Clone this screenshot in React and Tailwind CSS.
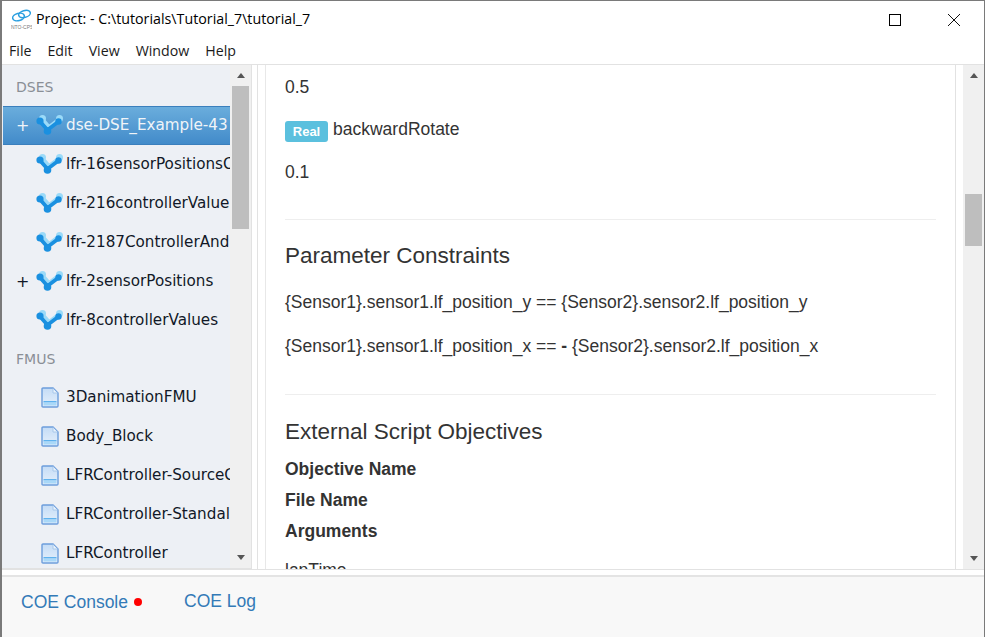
const V = () => (
  <svg width="28" height="21" viewBox="0 0 28 21" className="shrink-0">
    <circle cx="6.5" cy="3.5" r="3.5" fill="#9bdaf8" />
    <circle cx="23.5" cy="3.5" r="3.5" fill="#9bdaf8" />
    <path d="M6 4 L13 12 L23.5 4" fill="none" stroke="#9bdaf8" strokeWidth="4" />
    <path d="M4 6.5 L11.5 15 L22 7" fill="none" stroke="#1a90e0" strokeWidth="3.8" />
    <circle cx="4" cy="6" r="3.6" fill="#1a90e0" />
    <circle cx="22.5" cy="6.5" r="3.2" fill="#1a90e0" />
    <circle cx="11.5" cy="16" r="3.8" fill="#1a90e0" />
  </svg>
);

const F = () => (
  <svg width="18" height="21" viewBox="0 0 18 21" className="shrink-0">
    <defs>
      <linearGradient id="fg" x1="0" y1="0" x2="0" y2="1">
        <stop offset="0" stopColor="#c4dcf6" />
        <stop offset="1" stopColor="#e6f0fb" />
      </linearGradient>
    </defs>
    <path d="M1 2 Q1 1 2 1 H12 L17 6 V19 Q17 20 16 20 H2 Q1 20 1 19 Z" fill="url(#fg)" stroke="#6c9ddc" strokeWidth="1.4" />
    <rect x="2.5" y="14" width="13" height="1.5" fill="#5fb2ee" />
    <rect x="2.5" y="15.5" width="13" height="3" fill="#a9d8f8" />
    <path d="M12 1.5 V6 H16.5" fill="#e9f3fc" stroke="#a9c8ea" />
  </svg>
);

const Logo = () => (
  <svg width="21" height="21" viewBox="0 0 21 21" className="shrink-0">
    <ellipse cx="7.5" cy="8" rx="6" ry="3.6" fill="none" stroke="#2b9fe0" strokeWidth="1.5" transform="rotate(-15 7.5 8)" />
    <ellipse cx="13.5" cy="5" rx="6" ry="3.4" fill="none" stroke="#2b9fe0" strokeWidth="1.5" transform="rotate(-15 13.5 5)" />
    <text x="10.5" y="19.5" textAnchor="middle" fontSize="5" fill="#7a7a7a" fontFamily="Liberation Sans, sans-serif">INTO-CPS</text>
  </svg>
);

const Row = ({ plus, active, file, children }) => (
  <div
    className={
      "flex items-center h-[39px] shrink-0 " +
      (active
        ? "bg-gradient-to-b from-[#6aaddc] to-[#428bca] border-y border-[#3a7fbd] text-[#f0f4f8]"
        : "text-[#111827]")
    }
  >
    <span className="w-[33px] pl-[13px] text-[16px] leading-none shrink-0">{plus ? "+" : ""}</span>
    <span className={"flex shrink-0 w-[30px] " + (file ? "pl-[5px]" : "")}>{file ? <F /> : <V />}</span>
    <span className="whitespace-nowrap overflow-hidden min-w-0 flex-1">{children}</span>
  </div>
);

const Head = ({ children, className }) => (
  <div className={"text-[14px] leading-[20px] text-[#8a8f96] pl-[13px] shrink-0 " + className}>{children}</div>
);

const Up = () => <div className="w-0 h-0 border-x-[4.5px] border-x-transparent border-b-[5px] border-b-[#555]" />;
const Down = () => <div className="w-0 h-0 border-x-[4.5px] border-x-transparent border-t-[5px] border-t-[#555]" />;

export default function App() {
  return (
    <div className="w-[985px] h-[637px] flex flex-col overflow-hidden bg-white border border-[#7a7a7a] border-l-2 border-b-0" style={{ fontFamily: '"Liberation Sans", sans-serif' }}>
      <div className="h-[36px] flex items-center shrink-0 pl-[9px] text-[14.25px] text-black" style={{ fontFamily: '"Open Sans", sans-serif' }}>
        <Logo />
        <span className="ml-[4px] flex-1">Project: - C:\tutorials\Tutorial_7\tutorial_7</span>
        <div className="w-[46px] h-[36px] flex items-center justify-center mr-[13px] pt-px">
          <div className="w-[12px] h-[12px] border border-black" />
        </div>
        <div className="w-[46px] h-[36px] flex items-center justify-center mr-[7px] pt-px">
          <svg width="12" height="12" viewBox="0 0 12 12"><path d="M0 0 L12 12 M12 0 L0 12" stroke="#111" /></svg>
        </div>
      </div>
      <div className="h-[27px] flex items-center gap-[16px] pl-[7px] text-[14.2px] text-[#1a1a1a] shrink-0 border-b border-[#e2e2e2] box-content" style={{ fontFamily: '"Open Sans", sans-serif' }}>
        <span>File</span><span>Edit</span><span>View</span><span>Window</span><span>Help</span>
      </div>
      <div className="flex h-[505px] shrink-0 border-b border-[#e2e2e2]">
        <div className="w-[250px] shrink-0 flex pl-px bg-[#edf0f5] border-r border-b border-[#e2e2e2]" style={{ fontFamily: '"DejaVu Sans", sans-serif', fontSize: 15.2 }}>
          <div className="w-[227px] shrink-0 flex flex-col overflow-hidden pt-[12px]">
            <Head className="mb-[9px]">DSES</Head>
            <Row plus active>dse-DSE_Example-43</Row>
            <Row>lfr-16sensorPositionsC</Row>
            <Row>lfr-216controllerValue</Row>
            <Row>lfr-2187ControllerAnd</Row>
            <Row plus>lfr-2sensorPositions</Row>
            <Row>lfr-8controllerValues</Row>
            <Head className="mt-[9px] mb-[9px]">FMUS</Head>
            <Row file>3DanimationFMU</Row>
            <Row file>Body_Block</Row>
            <Row file>LFRController-SourceC</Row>
            <Row file>LFRController-Standal</Row>
            <Row file>LFRController</Row>
          </div>
          <div className="w-[21px] flex flex-col items-center bg-[#f0f0f0]">
            <div className="h-[21px] flex items-center justify-center shrink-0"><Up /></div>
            <div className="w-[17px] h-[143px] bg-[#bebebe] shrink-0" />
            <div className="flex-1" />
            <div className="h-[21px] flex items-center justify-center shrink-0"><Down /></div>
          </div>
        </div>
        <div className="w-[5px] shrink-0" />
        <div className="w-[699px] shrink-0 border-x border-[#e2e2e2] overflow-hidden">
          <div className="ml-[7px] h-full border-l border-[#e8e8e8] pl-[19px] pr-[19px] text-[#333] text-[17.5px] leading-[22px] overflow-hidden">
            <p className="mt-[11px]">0.5</p>
            <p className="mt-[20px] flex items-center">
              <span className="h-[21px] w-[43px] bg-[#5bc0de] rounded-[3px] text-white text-[13px] font-bold flex items-center justify-center mr-[5px] mt-[3px]">Real</span>
              <span className="-mt-[2px]">backwardRotate</span>
            </p>
            <p className="mt-[19px]">0.1</p>
            <div className="h-px bg-[#eeeeee] mt-[36px]" />
            <h3 className="text-[22.5px] leading-[26px] mt-[23px] text-[#333]">Parameter Constraints</h3>
            <p className="mt-[22px]">{"{Sensor1}.sensor1.lf_position_y == {Sensor2}.sensor2.lf_position_y"}</p>
            <p className="mt-[22px]">{"{Sensor1}.sensor1.lf_position_x == "}<b>-</b>{" {Sensor2}.sensor2.lf_position_x"}</p>
            <div className="h-px bg-[#eeeeee] mt-[37px]" />
            <h3 className="text-[22.5px] leading-[26px] mt-[24px] text-[#333]">External Script Objectives</h3>
            <p className="mt-[13px] font-bold">Objective Name</p>
            <p className="mt-[9px] font-bold">File Name</p>
            <p className="mt-[9px] font-bold">Arguments</p>
            <p className="mt-[17px]">lapTime</p>
          </div>
        </div>
        <div className="flex-1 min-w-0 flex justify-end">
          <div className="w-[21px] flex flex-col items-center bg-[#f0f0f0]">
            <div className="h-[21px] flex items-center justify-center shrink-0"><Up /></div>
            <div className="h-[108px] shrink-0" />
            <div className="w-[17px] h-[52px] bg-[#bebebe] shrink-0" />
            <div className="flex-1" />
            <div className="h-[21px] flex items-center justify-center shrink-0"><Down /></div>
          </div>
        </div>
      </div>
      <div className="h-[5px] shrink-0" />
      <div className="flex-1 bg-[#f8f8f8] border-t-2 border-[#e4e4e4] flex items-start pl-[19px] text-[17.5px] text-[#337ab7] pt-[12px]">
        <span>COE Console</span>
        <span className="w-[8px] h-[8px] rounded-full bg-[#ff0000] ml-[6px] mt-[9px]" />
        <span className="ml-[42px] -mt-px">COE Log</span>
      </div>
    </div>
  );
}
